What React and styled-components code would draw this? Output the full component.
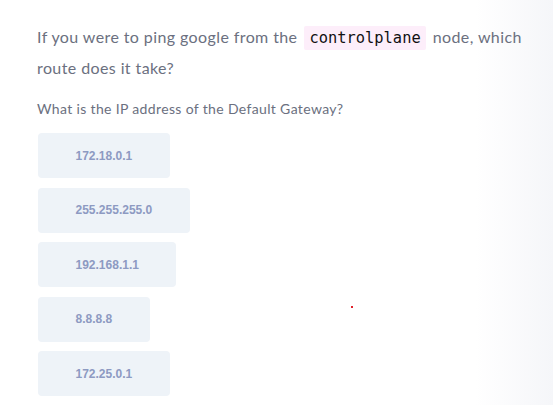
import React from 'react';
import styled, { createGlobalStyle } from 'styled-components';

const GlobalStyle = createGlobalStyle`
  html, body {
    margin: 0;
    padding: 0;
    height: 100%;
  }
  body {
    background: linear-gradient(to right, #ffffff 0%, #ffffff 86%, #f5f6f9 100%);
    font-family: Lato, "Noto Sans", sans-serif;
  }
`;

const Page = styled.div`
  position: relative;
  width: 553px;
  height: 405px;
  padding: 22px 0 0 37px;
  box-sizing: border-box;
`;

const Question = styled.p`
  margin: 0;
  max-width: 500px;
  font-size: 16px;
  letter-spacing: 0.4px;
  line-height: 30px;
  color: #6b7080;
`;

const Code = styled.code`
  font-family: "DejaVu Sans Mono", monospace;
  font-size: 15.4px;
  letter-spacing: 0;
  color: #111;
  background: #fdeefa;
  padding: 3px 5.5px;
  margin: 0 2px;
  border-radius: 2px;
`;

const SubQuestion = styled.p`
  margin: 17px 0 0;
  font-size: 14px;
  letter-spacing: 0.35px;
  line-height: 18px;
  color: #6b7080;
`;

const Options = styled.div`
  display: flex;
  flex-direction: column;
  align-items: flex-start;
  gap: 9.5px;
  margin: 15px 0 0 1px;
`;

const Option = styled.button`
  height: 45px;
  padding: 0 37.5px;
  border: none;
  border-radius: 4px;
  background: #eef3f8;
  color: #8d9ac2;
  font-family: "Liberation Sans", Arial, sans-serif;
  font-weight: 700;
  font-size: 12px;
  cursor: pointer;
`;

const Dot = styled.span`
  position: absolute;
  left: 351px;
  top: 306px;
  width: 2px;
  height: 2px;
  background: #e0202a;
`;

const answers = ['172.18.0.1', '255.255.255.0', '192.168.1.1', '8.8.8.8', '172.25.0.1'];

export default function App() {
  return (
    <>
      <GlobalStyle />
      <Page>
        <Question>
          If you were to ping google from the <Code>controlplane</Code> node, which route does it take?
        </Question>
        <SubQuestion>What is the IP address of the Default Gateway?</SubQuestion>
        <Options>
          {answers.map((a) => (
            <Option key={a}>{a}</Option>
          ))}
        </Options>
        <Dot />
      </Page>
    </>
  );
}
